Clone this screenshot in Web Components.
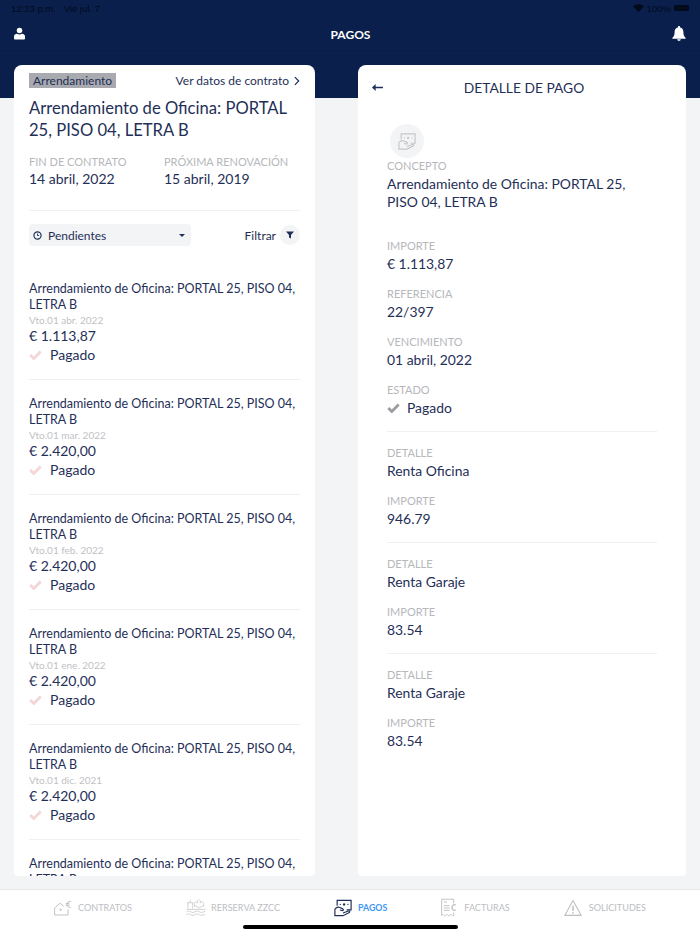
<!DOCTYPE html>
<html lang="es">
<head>
<meta charset="utf-8">
<title>Pagos</title>
<style>
    html, body { margin: 0; height: 100%; }
    body { font-family: "Lato", "Noto Sans", sans-serif; color: #1f2f58; }
</style>
</head>
<body>
<app-shell>
    <status-bar slot="status"></status-bar>
    <top-bar slot="top" heading="PAGOS"></top-bar>

    <contract-panel slot="left">
        <payment-row due="Vto.01 abr. 2022" amount="€ 1.113,87"></payment-row>
        <payment-row due="Vto.01 mar. 2022" amount="€ 2.420,00"></payment-row>
        <payment-row due="Vto.01 feb. 2022" amount="€ 2.420,00"></payment-row>
        <payment-row due="Vto.01 ene. 2022" amount="€ 2.420,00"></payment-row>
        <payment-row due="Vto.01 dic. 2021" amount="€ 2.420,00"></payment-row>
        <payment-row></payment-row>
    </contract-panel>

    <detail-panel slot="right"></detail-panel>

    <tab-bar slot="tabs">
        <tab-item icon="house" label="CONTRATOS" style="--gap: 6px"></tab-item>
        <tab-item icon="pool" label="RERSERVA ZZCC" style="--gap: 5px"></tab-item>
        <tab-item icon="money" label="PAGOS" style="--gap: 6px" active></tab-item>
        <tab-item icon="invoice" label="FACTURAS" style="--gap: 8px"></tab-item>
        <tab-item icon="warning" label="SOLICITUDES" style="--gap: 7px"></tab-item>
    </tab-bar>
</app-shell>

<script>
const icons = {
    user: `<svg viewBox="0 0 12 13" width="11" height="13"><circle cx="6" cy="3.3" r="3" fill="currentColor"/><path d="M1 13c-.6 0-1-.4-1-1V9.800C0 8 1.600 6.900 3.200 6.900c.8.5 1.800.8 2.800.8s2-.3 2.800-.8C10.400 6.900 12 8 12 9.800V12c0 .6-.4 1-1 1z" fill="currentColor"/></svg>`,
    bell: `<svg viewBox="0 0 14 15" width="14" height="15"><path d="M7 0c-.7 0-1.100.5-1.100 1.100v.5C3.700 2.100 2.600 3.900 2.600 6c0 3-.7 4.500-2.100 5.700-.4.4-.2 1 .4 1h12.200c.6 0 .8-.6.4-1C12.100 10.500 11.400 9 11.400 6c0-2.100-1.100-3.900-3.300-4.400v-.5C8.100.5 7.700 0 7 0zM5.200 13.300c.1.900.9 1.700 1.800 1.700s1.700-.8 1.800-1.700z" fill="currentColor"/></svg>`,
    check: `<svg viewBox="0 0 13 10" width="13" height="10"><path d="M1.300 5l3.500 3.500L11.700 1.500" fill="none" stroke="currentColor" stroke-width="2.800"/></svg>`,
    money: `<svg viewBox="0 0 20 19" width="100%" height="100%" fill="none" stroke="currentColor" stroke-width="1.300"><path d="M3.500 7V1h15.500v10.500h-5"/><circle cx="11.200" cy="5.500" r="1.300" fill="currentColor" stroke="none"/><circle cx="7" cy="5.500" r=".7" fill="currentColor" stroke="none"/><circle cx="15.500" cy="5.500" r=".7" fill="currentColor" stroke="none"/><path d="M1 10.500c2-2 4-2.500 5.500-1.500l3.300 1.500c1.200.6.600 2.200-.8 1.800l-2.500-.6"/><path d="M1 10.500V18h9l7-3.500c1.200-.8.300-2.200-1-1.700l-6 2.300"/></svg>`,
    house: `<svg viewBox="0 0 19 16" width="18" height="16" fill="none" stroke="currentColor" stroke-width="1"><path d="M.6 15.400V8.200L6.500 3l3.700 3"/><path d="M.6 15.400H14.800V9.500"/><path d="M7 8.500v2.500M5.800 9.800h2.400" stroke-width=".9"/><path d="M18 1.200c-2.600-.8-4.300.9-4.300 3s1.700 3.800 4.300 3M12.500 3.400h4M12.500 5.100h4"/></svg>`,
    pool: `<svg viewBox="0 0 21 19" width="20" height="19" fill="none" stroke="#cfd0d3" stroke-width="1"><path d="M1 4.500h7M4.500 1.500v3M2 4.500v6M7 4.500v6"/><path d="M9 9V5l1.500-2 1.500 2V2.500L13.500 1 15 2.500V5l1.500-2L18.500 5v4" stroke-width=".9"/><path d="M9.500 7.500l4 2.500 5-2.500"/><path d="M.5 11.500h20M.5 14c1.700-1 3-1 4.500 0s3 1 4.500 0 3-1 4.500 0 3 1 6-.5M.5 17c1.700-1 3-1 4.500 0s3 1 4.500 0 3-1 4.500 0 3 1 6-.5"/></svg>`,
    invoice: `<svg viewBox="0 0 16 19" width="15" height="19" fill="none" stroke="currentColor" stroke-width="1"><path d="M.7 18V.7h12.800V5"/><path d="M.7 17.700c1-1 1.500-1 2.200 0s1.400 1 2.200 0 1.500-1 2.200 0 1.400 1 2.200 0 1.500-1 2.200 0 1.400 1 1.800.3V15"/><path d="M3 3.500h3.500M3 7.500h6M3 10h6M3 12.500h6"/><path d="M15.700 6.700c-2.300-.7-4 .8-4 2.800s1.700 3.500 4 2.800" stroke-width="1.400"/></svg>`,
    warning: `<svg viewBox="0 0 19 18" width="18" height="18" fill="none" stroke="currentColor" stroke-width="1.100"><path d="M9.500 1L.8 16.800h17.400z" stroke-linejoin="round"/><path d="M9.500 6.500v5.500" stroke-width="1.600"/><circle cx="9.500" cy="14.200" r=".9" fill="currentColor" stroke="none"/></svg>`
};

const contractTitle = 'Arrendamiento de Oficina: PORTAL 25, PISO 04, LETRA B';

class AppShell extends HTMLElement {
    constructor() {
        super();
        this.attachShadow({ mode: 'open' });
        this.shadowRoot.innerHTML = `
        <style>
            :host {
                display: grid;
                grid-template-rows: auto auto 1fr auto;
                height: 934px;
                overflow: hidden;
                background: linear-gradient(#0a1f4c 98px, #f3f4f6 98px);
            }
            .panels {
                display: grid;
                grid-template-columns: 301px 328px;
                justify-content: space-between;
                padding: 0 14px 13px;
                min-height: 0;
            }
        </style>
        <slot name="status"></slot>
        <slot name="top"></slot>
        <div class="panels">
            <slot name="left"></slot>
            <slot name="right"></slot>
        </div>
        <slot name="tabs"></slot>`;
    }
}

class StatusBar extends HTMLElement {
    constructor() {
        super();
        this.attachShadow({ mode: 'open' });
        this.shadowRoot.innerHTML = `
        <style>
            :host {
                display: flex;
                justify-content: space-between;
                align-items: center;
                height: 16px;
                padding: 0 11px;
                font: 9.5px "Liberation Sans", sans-serif;
                color: #020a1c;
            }
            .right { display: flex; align-items: center; gap: 3px; }
            .day { margin-left: 8px; }
            .battery { width: 15px; height: 6px; background: #020a1c; border-radius: 1px; }
        </style>
        <div><span>12:23 p.m.</span><span class="day">Vie jul. 7</span></div>
        <div class="right">
            <svg viewBox="0 0 12 9" width="11" height="8"><path d="M6 9L0 2.700C3.500-.6 8.500-.6 12 2.700z" fill="#020a1c"/></svg>
            <span>100%</span>
            <div class="battery"></div>
        </div>`;
    }
}

class TopBar extends HTMLElement {
    constructor() {
        super();
        this.attachShadow({ mode: 'open' });
        this.shadowRoot.innerHTML = `
        <style>
            :host {
                display: grid;
                grid-template-columns: 1fr auto 1fr;
                align-items: center;
                height: 37px;
                padding: 0 14px;
                margin-bottom: 12px;
                color: #fff;
                box-shadow: 0 1px 0 #0c2250;
            }
            h1 { margin: 0 0 0 1px; font-size: 12px; font-weight: 700; }
            .left { display: flex; margin-bottom: 2px; }
            .right { display: flex; justify-content: flex-end; margin-bottom: 2px; }
        </style>
        <div class="left">${icons.user}</div>
        <h1>${this.getAttribute('heading')}</h1>
        <div class="right">${icons.bell}</div>`;
    }
}

class ContractPanel extends HTMLElement {
    constructor() {
        super();
        this.attachShadow({ mode: 'open' });
        this.shadowRoot.innerHTML = `
        <style>
            :host {
                display: block;
                background: #fff;
                border-radius: 8px 8px 4px 4px;
                padding: 8px 15px 0;
                overflow: hidden;
                min-height: 0;
            }
            .top { display: flex; justify-content: space-between; align-items: center; height: 15px; }
            .tag { background: #a8aaaf; padding: 0 4px; font-size: 12px; line-height: 15px; }
            .link { display: flex; align-items: center; gap: 5px; font-size: 12px; }
            h2 { margin: 9px 0 0; font-size: 16.6px; font-weight: 400; line-height: 22px; }
            .dates { display: grid; grid-template-columns: 135px 1fr; margin-top: 12px; padding-bottom: 21px; border-bottom: 1px solid #f0f1f3; }
            .label { font-size: 11px; line-height: 15px; padding-top: 1px; color: #b6b8bc; }
            .value { font-size: 14px; line-height: 20px; }
            .tools { display: flex; justify-content: space-between; align-items: center; margin: 13px 0 19px; }
            .select { display: flex; align-items: center; width: 162px; height: 22px; box-sizing: border-box; padding: 0 4px; background: #f3f4f6; border-radius: 4px; font-size: 12px; }
            .select svg { margin-right: 6px; }
            .caret { margin-left: auto; border: 3px solid transparent; border-top: 3.5px solid #1f2f58; border-bottom: 0; margin-right: 2px; }
            .filter { display: flex; align-items: center; gap: 4px; font-size: 12px; }
            .round { display: flex; align-items: center; justify-content: center; width: 20px; height: 20px; border-radius: 50%; background: #f3f4f6; }
        </style>
        <div class="top">
            <span class="tag">Arrendamiento</span>
            <span class="link">Ver datos de contrato
                <svg viewBox="0 0 7 11" width="6" height="10"><path d="M1 1l4.500 4.500L1 10" fill="none" stroke="currentColor" stroke-width="1.400"/></svg>
            </span>
        </div>
        <h2>${contractTitle}</h2>
        <div class="dates">
            <div><div class="label">FIN DE CONTRATO</div><div class="value">14 abril, 2022</div></div>
            <div><div class="label">PRÓXIMA RENOVACIÓN</div><div class="value">15 abril, 2019</div></div>
        </div>
        <div class="tools">
            <div class="select">
                <svg viewBox="0 0 10 10" width="9" height="9"><circle cx="5" cy="5" r="4" fill="none" stroke="currentColor" stroke-width="1.300"/><path d="M5 2.800V5h1.800" fill="none" stroke="currentColor"/></svg>
                Pendientes<span class="caret"></span>
            </div>
            <div class="filter">Filtrar
                <span class="round"><svg viewBox="0 0 8 8" width="8" height="8"><path d="M0 .5h8L5 4v3.500L3 6.500V4z" fill="currentColor"/></svg></span>
            </div>
        </div>
        <slot></slot>`;
    }
}

class PaymentRow extends HTMLElement {
    constructor() {
        super();
        this.attachShadow({ mode: 'open' });
        const due = this.getAttribute('due');
        this.shadowRoot.innerHTML = `
        <style>
            :host { display: block; padding: 16px 0 15px; border-bottom: 1px solid #eff0f2; }
            :host(:last-child) { border-bottom: 0; padding-bottom: 0; }
            .title { font-size: 12.5px; line-height: 16px; }
            .due { font-size: 10px; line-height: 15px; color: #bfc1c5; }
            .amount { font-size: 14px; line-height: 16px; }
            .state { display: flex; align-items: center; gap: 8px; font-size: 14px; line-height: 18px; margin-top: 2px; }
            .state svg { color: #f3d6d6; }
        </style>
        <div class="title">${contractTitle}</div>
        ${due ? `<div class="due">${due}</div>
        <div class="amount">${this.getAttribute('amount')}</div>
        <div class="state">${icons.check}Pagado</div>` : ''}`;
    }
}

class DetailField extends HTMLElement {
    constructor() {
        super();
        this.attachShadow({ mode: 'open' });
        this.shadowRoot.innerHTML = `
        <style>
            :host { display: block; margin-bottom: 12px; }
            :host(:last-child) { margin-bottom: 0; }
            .label { font-size: 11px; line-height: 17px; color: #b6b8bc; }
            .value { font-size: 13.9px; line-height: 18px; padding-top: 1px; }
            .value.row { display: flex; align-items: center; gap: 7px; }
            ::slotted(svg) { color: #9b9da1; }
        </style>
        <div class="label">${this.getAttribute('label')}</div>
        <div class="value ${this.hasAttribute('row') ? 'row' : ''}"><slot></slot></div>`;
    }
}

class DetailPanel extends HTMLElement {
    constructor() {
        super();
        this.attachShadow({ mode: 'open' });
        this.shadowRoot.innerHTML = `
        <style>
            :host {
                display: block;
                background: #fff;
                border-radius: 8px 8px 4px 4px;
                overflow: hidden;
                min-height: 0;
            }
            header { display: grid; grid-template-columns: 1fr auto 1fr; align-items: center; height: 44px; padding: 0 14px 0 14px; font-size: 13.8px; }
            header span { margin-left: 4px; }
            .icon { width: 34px; height: 34px; margin: 15px 0 -1px 32px; border-radius: 50%; background: #f3f4f6; color: #c5c6c9; display: flex; align-items: center; justify-content: center; }
            .icon span { width: 18px; height: 17px; display: block; }
            section { margin: 0 29px; padding: 12px 0 14px; border-bottom: 1px solid #eff0f2; }
            section:last-of-type { border-bottom: 0; }
            section.first { padding: 0 0 14px; }
            .concept { margin-bottom: 26px; }
        </style>
        <header>
            <svg viewBox="0 0 11 7" width="11" height="7"><path d="M3.600 0v7L0 3.500z" fill="currentColor"/><path d="M2 3.500h9" stroke="currentColor" stroke-width="1.500"/></svg>
            <span>DETALLE DE PAGO</span>
        </header>
        <div class="icon"><span>${icons.money}</span></div>
        <section class="first">
            <detail-field class="concept" label="CONCEPTO">Arrendamiento de Oficina: PORTAL 25,<br>PISO 04, LETRA B</detail-field>
            <detail-field label="IMPORTE">€ 1.113,87</detail-field>
            <detail-field label="REFERENCIA">22/397</detail-field>
            <detail-field label="VENCIMIENTO">01 abril, 2022</detail-field>
            <detail-field label="ESTADO" row>${icons.check}Pagado</detail-field>
        </section>
        <section>
            <detail-field label="DETALLE">Renta Oficina</detail-field>
            <detail-field label="IMPORTE">946.79</detail-field>
        </section>
        <section>
            <detail-field label="DETALLE">Renta Garaje</detail-field>
            <detail-field label="IMPORTE">83.54</detail-field>
        </section>
        <section>
            <detail-field label="DETALLE">Renta Garaje</detail-field>
            <detail-field label="IMPORTE">83.54</detail-field>
        </section>`;
    }
}

class TabBar extends HTMLElement {
    constructor() {
        super();
        this.attachShadow({ mode: 'open' });
        this.shadowRoot.innerHTML = `
        <style>
            :host { display: block; height: 45px; box-sizing: border-box; background: #fff; border-top: 1px solid #e6e7e9; }
            .items { display: flex; justify-content: space-evenly; height: 35px; }
            .home { width: 215px; height: 4px; margin: 0 auto; background: #000; border-radius: 2px; }
        </style>
        <div class="items"><slot></slot></div>
        <div class="home"></div>`;
    }
}

class TabItem extends HTMLElement {
    constructor() {
        super();
        this.attachShadow({ mode: 'open' });
        const name = this.getAttribute('icon');
        this.shadowRoot.innerHTML = `
        <style>
            :host { display: flex; align-items: center; gap: var(--gap, 6px); font-size: 9.1px; color: #bcbec2; }
            :host([active]) { color: #3d97f4; font-weight: 700; font-size: 8.8px; }
            .icon { display: flex; width: ${name === 'money' ? '18px' : 'auto'}; height: ${name === 'money' ? '18px' : 'auto'}; }
            :host([active]) .icon { color: #1f2f58; }
        </style>
        <span class="icon">${icons[name]}</span>
        <span>${this.getAttribute('label')}</span>`;
    }
}

customElements.define('app-shell', AppShell);
customElements.define('status-bar', StatusBar);
customElements.define('top-bar', TopBar);
customElements.define('contract-panel', ContractPanel);
customElements.define('payment-row', PaymentRow);
customElements.define('detail-field', DetailField);
customElements.define('detail-panel', DetailPanel);
customElements.define('tab-bar', TabBar);
customElements.define('tab-item', TabItem);
</script>
</body>
</html>
